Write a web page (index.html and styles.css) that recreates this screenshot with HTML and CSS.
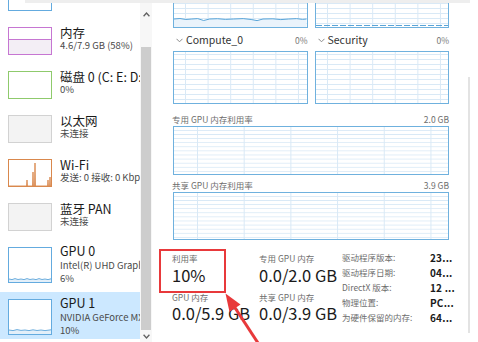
FILE: index.html
```html
<!DOCTYPE html>
<html lang="zh-CN">
<head>
<meta charset="utf-8">
<title>任务管理器 - GPU</title>
<link rel="stylesheet" href="styles.css">
</head>
<body>
<div class="app">
  <aside class="side">
    <div class="list">
      <div class="item">
        <div class="thumb-box blue"></div>
        <div class="info"></div>
      </div>
      <div class="item">
        <div class="thumb-box mem"><div class="mem-fill" style="height:58%"></div></div>
        <div class="info"><div class="t">内存</div><div class="s">4.6/7.9 GB (58%)</div></div>
      </div>
      <div class="item">
        <div class="thumb-box disk"></div>
        <div class="info"><div class="t">磁盘 0 (C: E: D:)</div><div class="s">0%</div></div>
      </div>
      <div class="item">
        <div class="thumb-box off"></div>
        <div class="info"><div class="t">以太网</div><div class="s">未连接</div></div>
      </div>
      <div class="item">
        <div class="thumb-box wifi">
          <svg class="spark" viewBox="0 0 42 26" preserveAspectRatio="none"><polyline points="0,26 17.5,26 18,20 18.5,26 23.5,26 24,12 24.5,26 25.5,26 26,3 26.5,26 38.5,26 39,20 39.5,26 40.5,26 41,17 41.5,26 42,26" fill="none" stroke="#d9884d" stroke-width="0.9"/></svg>
        </div>
        <div class="info"><div class="t">Wi-Fi</div><div class="s">发送: 0 接收: 0 Kbps</div></div>
      </div>
      <div class="item">
        <div class="thumb-box off"></div>
        <div class="info"><div class="t">蓝牙 PAN</div><div class="s">未连接</div></div>
      </div>
      <div class="item gpu">
        <div class="thumb-box blue">
          <svg class="spark" viewBox="0 0 42 34" preserveAspectRatio="none"><polygon points="0,31 3,31.6 6,30.6 9,31.5 12,31 15,31.6 18,30.6 21,31.5 24,31 27,31.6 30,30.6 33,31.5 36,31 39,31.6 42,30.8 42,34 0,34" fill="#e3eff9"/><polyline points="0,31 3,31.6 6,30.6 9,31.5 12,31 15,31.6 18,30.6 21,31.5 24,31 27,31.6 30,30.6 33,31.5 36,31 39,31.6 42,30.8" fill="none" stroke="#4a9ad6" stroke-width="0.8"/></svg>
        </div>
        <div class="info"><div class="t">GPU 0</div><div class="s">Intel(R) UHD Graphics 620</div><div class="s">6%</div></div>
      </div>
      <div class="item gpu sel">
        <div class="thumb-box blue">
          <svg class="spark" viewBox="0 0 42 34" preserveAspectRatio="none"><polygon points="0,30 4,30.6 8,29.6 12,30.4 16,30 20,30.6 24,29.8 28,30.5 32,30 36,30.6 42,29.8 42,34 0,34" fill="#e3eff9"/><polyline points="0,30 4,30.6 8,29.6 12,30.4 16,30 20,30.6 24,29.8 28,30.5 32,30 36,30.6 42,29.8" fill="none" stroke="#4a9ad6" stroke-width="0.8"/></svg>
        </div>
        <div class="info"><div class="t">GPU 1</div><div class="s">NVIDIA GeForce MX150</div><div class="s">10%</div></div>
      </div>
    </div>
  </aside>

  <div class="scroll">
    <div class="arrow-top"><svg width="7" height="5" viewBox="0 0 7 5"><polyline points="0.6,4.2 3.5,1 6.4,4.2" fill="none" stroke="#606060" stroke-width="1.3"/></svg></div>
    <div class="thumb"></div>
    <div class="arrow-bottom"><svg width="7" height="5" viewBox="0 0 7 5"><polyline points="0.6,0.8 3.5,4 6.4,0.8" fill="none" stroke="#606060" stroke-width="1.3"/></svg></div>
  </div>

  <main class="main">
    <div class="pair top">
      <div class="graph small">
        <svg class="trace" viewBox="0 0 134 51" preserveAspectRatio="none"><polygon points="0,43 6,42.5 12,43.5 18,43 24,42.6 30,44.5 36,43 44,42.7 52,43.4 60,43 70,42.6 78,43.5 84,44.6 90,43 100,42.8 108,43.6 116,43 124,42.6 130,43.4 134,43 134,51 0,51" fill="#eaf3fb"/><polyline points="0,43 6,42.5 12,43.5 18,43 24,42.6 30,44.5 36,43 44,42.7 52,43.4 60,43 70,42.6 78,43.5 84,44.6 90,43 100,42.8 108,43.6 116,43 124,42.6 130,43.4 134,43" fill="none" stroke="#5aa5d8" stroke-width="1" vector-effect="non-scaling-stroke"/></svg>
      </div>
      <div class="graph small">
        <svg class="trace" viewBox="0 0 134 51" preserveAspectRatio="none"><polyline points="0,49.5 134,49.5" fill="none" stroke="#5aa5d8" stroke-width="1.2" stroke-dasharray="6 2" vector-effect="non-scaling-stroke"/></svg>
      </div>
    </div>
    <div class="pair">
      <div class="col">
        <div class="hdr"><span class="name"><svg class="chev" width="7" height="5" viewBox="0 0 7 5"><polyline points="0.5,0.8 3.5,3.8 6.5,0.8" fill="none" stroke="#8a8a8a" stroke-width="1"/></svg>Compute_0</span><span class="pct">0%</span></div>
        <div class="graph small"></div>
      </div>
      <div class="col">
        <div class="hdr"><span class="name"><svg class="chev" width="7" height="5" viewBox="0 0 7 5"><polyline points="0.5,0.8 3.5,3.8 6.5,0.8" fill="none" stroke="#8a8a8a" stroke-width="1"/></svg>Security</span><span class="pct">0%</span></div>
        <div class="graph small"></div>
      </div>
    </div>
    <div class="lbl first"><span>专用 GPU 内存利用率</span><span>2.0 GB</span></div>
    <div class="graph wide g1"></div>
    <div class="lbl second"><span>共享 GPU 内存利用率</span><span>3.9 GB</span></div>
    <div class="graph wide g2"></div>

    <div class="stats">
      <div class="stat">
        <div class="k">利用率</div>
        <div class="v">10%</div>
        <div class="k k2">GPU 内存</div>
        <div class="v v2">0.0/5.9 GB</div>
      </div>
      <div class="stat">
        <div class="k">专用 GPU 内存</div>
        <div class="v">0.0/2.0 GB</div>
        <div class="k k2">共享 GPU 内存</div>
        <div class="v v2">0.0/3.9 GB</div>
      </div>
      <div class="props">
        <span class="pk">驱动程序版本:</span><span class="pv">23...</span>
        <span class="pk">驱动程序日期:</span><span class="pv">04...</span>
        <span class="pk">DirectX 版本:</span><span class="pv">12 ...</span>
        <span class="pk">物理位置:</span><span class="pv">PC...</span>
        <span class="pk">为硬件保留的内存:</span><span class="pv">64...</span>
      </div>
    </div>
  </main>

  <div class="edge"></div>

  <div class="topline"></div>
  <div class="mark"></div>
  <svg class="pointer" width="478" height="342" viewBox="0 0 478 342">
    <line x1="234.5" y1="307" x2="258" y2="343" stroke="#e8393b" stroke-width="3"/>
    <polygon points="225.5,293.5 240.5,304.5 229.5,312" fill="#e8393b"/>
  </svg>
</div>
</body>
</html>
```

FILE: styles.css
```css
* { box-sizing: border-box; }
html, body { margin: 0; padding: 0; background: #fff; }
body {
  font-family: "Noto Sans CJK SC", "Noto Sans", sans-serif;
  color: #1a1a1a;
}
.app {
  position: relative;
  width: 478px;
  height: 342px;
  overflow: hidden;
  display: flex;
  background: #fff;
}

/* left list */
.side {
  width: 140px;
  flex: none;
  height: 342px;
  overflow: hidden;
}
.list { margin-top: -24px; }
.item {
  display: flex;
  align-items: flex-start;
  gap: 8px;
  padding: 7px 0 9px 8px;
  white-space: nowrap;
}
.item.gpu { padding-bottom: 7px; }
.item.sel { background: #cce8ff; padding-bottom: 2px; }
.thumb-box {
  width: 44px;
  height: 28px;
  flex: none;
  border: 1px solid #6aaee0;
  background: #fff;
  display: flex;
  flex-direction: column;
  justify-content: flex-end;
  overflow: hidden;
}
.gpu .thumb-box { height: 36px; }
.thumb-box.blue { border-color: #64abdf; }
.thumb-box.mem { border-color: #c676d2; }
.mem-fill { background: #f3eef5; border-top: 1px solid #c676d2; }
.thumb-box.disk { border-color: #8fca6c; }
.thumb-box.off { border-color: #d2d2d2; background: #f3f3f3; }
.thumb-box.wifi { border-color: #d9884d; }
.spark { width: 100%; height: 100%; display: block; }
.info { margin-top: -2px; }
.t { font-size: 12.5px; line-height: 15px; color: #1a1a1a; }
.s { font-size: 9.5px; line-height: 11px; color: #4a4a4a; }
.gpu .info { margin-top: -4px; }
.gpu .t { line-height: 16px; font-size: 12.5px; }
.gpu .s { line-height: 13px; }

/* scrollbar */
.scroll {
  width: 12px;
  flex: none;
  background: #f7f7f7;
  display: flex;
  flex-direction: column;
  align-items: center;
}
.arrow-top { height: 47px; padding-top: 12px; }
.arrow-top svg, .arrow-bottom svg { display: block; }
.thumb { width: 10px; flex: 1; background: #cdcdcd; }
.arrow-bottom { height: 12px; padding-top: 4px; }

/* main */
.main {
  width: 316px;
  flex: none;
  padding: 0 19px 0 21px;
}
.pair {
  display: grid;
  grid-template-columns: 1fr 1fr;
  column-gap: 7px;
}
.pair.top { margin-top: -25px; }
.graph {
  border: 1px solid #6fb1de;
  background-color: #fff;
  position: relative;
}
.graph.small {
  height: 53px;
  background-image:
    linear-gradient(to right, #d9e9f6 1px, transparent 1px),
    linear-gradient(to bottom, #d9e9f6 1px, transparent 1px);
  background-size: 22.6px 100%, 100% 5px;
  background-position: 11px 0, 0 2px;
}
.graph.wide {
  background-image:
    linear-gradient(to right, #d9e9f6 1px, transparent 1px),
    linear-gradient(to bottom, #d9e9f6 1px, transparent 1px);
  background-size: 46.7px 100%, 100% 4.1px;
  background-position: 23px 0, 0 3px;
}
.graph.g1 { height: 49px; }
.graph.g2 { height: 48px; }
.trace { position: absolute; inset: 0; width: 100%; height: 100%; display: block; }

.hdr {
  height: 23px;
  display: flex;
  align-items: center;
  justify-content: space-between;
  padding-left: 3px;
  padding-top: 1px;
}
.name { font-size: 10.5px; color: #333; display: flex; align-items: center; gap: 3px; line-height: 14px; }
.chev { display: block; }
.pct { font-size: 8.5px; color: #777; line-height: 12px; }

.lbl {
  display: flex;
  justify-content: space-between;
  font-size: 8.5px;
  line-height: 12px;
  color: #6d6d6d;
  padding-bottom: 1px;
  margin-left: -1px;
}
.lbl.first { padding-top: 9px; }
.lbl.second { padding-top: 4px; }

/* stats */
.stats {
  display: grid;
  grid-template-columns: 87px 83px 110px;
  padding-top: 12px;
  margin-left: -1px;
  white-space: nowrap;
}
.k { font-size: 8.5px; line-height: 12px; color: #6d6d6d; }
.k2 { margin-top: 5px; }
.v { font-size: 16.5px; line-height: 22px; color: #1a1a1a; }
.v2 { line-height: 20px; }
.props {
  display: grid;
  grid-template-columns: 88px max-content;
  margin-top: -2px;
}
.pk { font-size: 8.5px; line-height: 15px; color: #6d6d6d; }
.pv { font-size: 10px; line-height: 15px; color: #1a1a1a; font-weight: 700; letter-spacing: 0.2px; }

.edge {
  width: 2px;
  flex: none;
  margin-top: 77px;
  height: 256px;
  background: #e3e3e3;
}

/* overlays */
.topline {
  position: absolute;
  left: 25px;
  top: 0;
  width: 445px;
  height: 3px;
  background: #eeeeee;
}
.mark {
  position: absolute;
  left: 159px;
  top: 249px;
  width: 67px;
  height: 44px;
  border: 2px solid #e8393b;
}
.pointer { position: absolute; left: 0; top: 0; pointer-events: none; }
```
